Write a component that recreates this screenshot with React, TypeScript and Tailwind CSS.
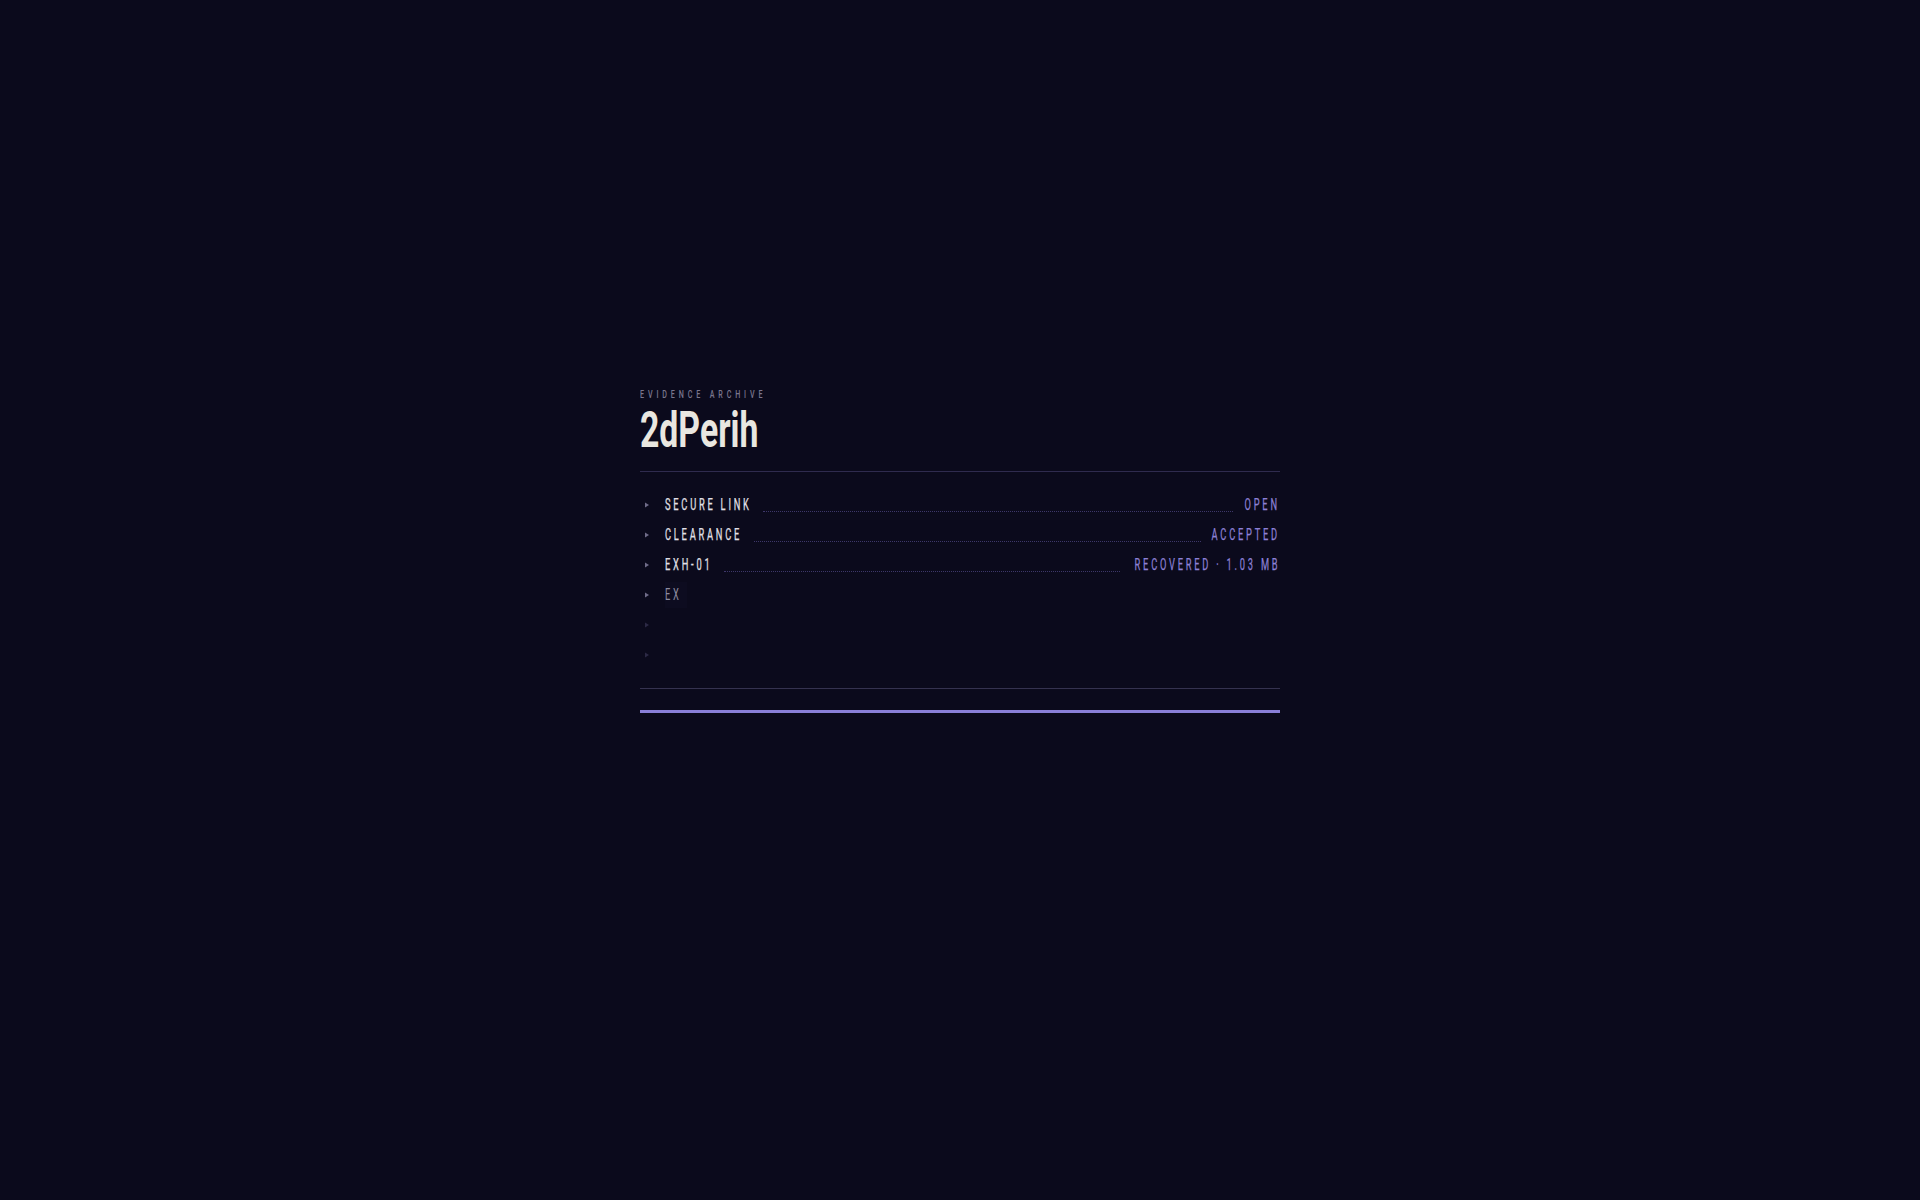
import React from 'react';

const rows = [
  { key: 'SECURE LINK', keyW: 'w-[86px]', value: 'OPEN', valW: 'w-[36px]' },
  { key: 'CLEARANCE', keyW: 'w-[77px]', value: 'ACCEPTED', valW: 'w-[68px]' },
  { key: 'EXH-01', keyW: 'w-[47px]', value: 'RECOVERED · 1.03 MB', valW: 'w-[149px]' },
];

// Narrow text: the installed fonts have no condensed cut, so squeeze horizontally
const Narrow: React.FC<{ text: string; w: string; right?: boolean; className?: string }> = ({
  text,
  w,
  right,
  className,
}) => (
  <span className={`flex shrink-0 whitespace-nowrap ${w} ${right ? 'justify-end' : 'justify-start'}`}>
    <span className={`inline-block scale-x-[0.58] ${right ? 'origin-right' : 'origin-left'} ${className ?? ''}`}>{text}</span>
  </span>
);

const Arrow: React.FC<{ dim?: boolean }> = ({ dim }) => (
  <svg width="6" height="6" viewBox="0 0 6 6" className={dim ? 'text-[#2c2945]' : 'text-[#6f6b88]'}>
    <path d="M1 0.5 L5 3 L1 5.5 Z" fill="currentColor" />
  </svg>
);

const App: React.FC = () => {
  return (
    <div className="min-h-[1200px] w-full bg-[#0b0a1c] font-['Roboto','Liberation_Sans',sans-serif]">
      <div className="mx-auto w-[640px] pt-[389px]">
        <div className="h-[11px] text-[11px] leading-[11px] font-medium whitespace-nowrap">
          <span className="inline-block origin-left scale-x-[0.65] tracking-[0.54em] text-[#7a768e]">EVIDENCE ARCHIVE</span>
        </div>
        <h1 className="mt-[9px] h-[42px] text-[50px] leading-[42px] font-bold whitespace-nowrap text-[#e9e7e0]">
          <span className="inline-block origin-left scale-x-[0.675]">2dPerih</span>
        </h1>
        <div className="mt-[20px] h-px bg-[#2f2b4e]" />

        {/* Rows */}
        <div className="py-[18px]">
          {rows.map((r) => (
            <div key={r.key} className="flex h-[30px] items-center text-[16px] font-normal tracking-[0.3em]">
              <div className="flex w-[25px] shrink-0 pl-[4px]">
                <Arrow />
              </div>
              <Narrow text={r.key} w={r.keyW} className="text-[#e2e0e8] [-webkit-text-stroke:0.25px_#e2e0e8]" />
              <div className="ml-[12px] mr-[11px] mt-[12px] flex-1 border-b border-dotted border-[#3d3769]" />
              <Narrow
                text={r.value}
                w={r.valW}
                right
                className="text-[#8c80d6] [-webkit-text-stroke:0.25px_#8c80d6]"
              />
            </div>
          ))}
          <div className="flex h-[30px] items-center text-[16px] font-normal tracking-[0.3em]">
            <div className="flex w-[25px] shrink-0 pl-[4px]">
              <Arrow />
            </div>
            <span className="flex h-[26px] w-[22px] items-center bg-[#0d0c20]">
              <Narrow text="EX" w="w-[20px]" className="text-[#8f8ca0]" />
            </span>
          </div>
          <div className="flex h-[30px] items-center">
            <div className="flex w-[25px] shrink-0 pl-[4px]">
              <Arrow dim />
            </div>
          </div>
          <div className="flex h-[30px] items-center">
            <div className="flex w-[25px] shrink-0 pl-[4px]">
              <Arrow dim />
            </div>
          </div>
        </div>

        <div className="h-px bg-[#35324f]" />
        <div className="mt-[21px] h-[3px] bg-[#8a7fd8]" />
      </div>
    </div>
  );
};

export default App;
